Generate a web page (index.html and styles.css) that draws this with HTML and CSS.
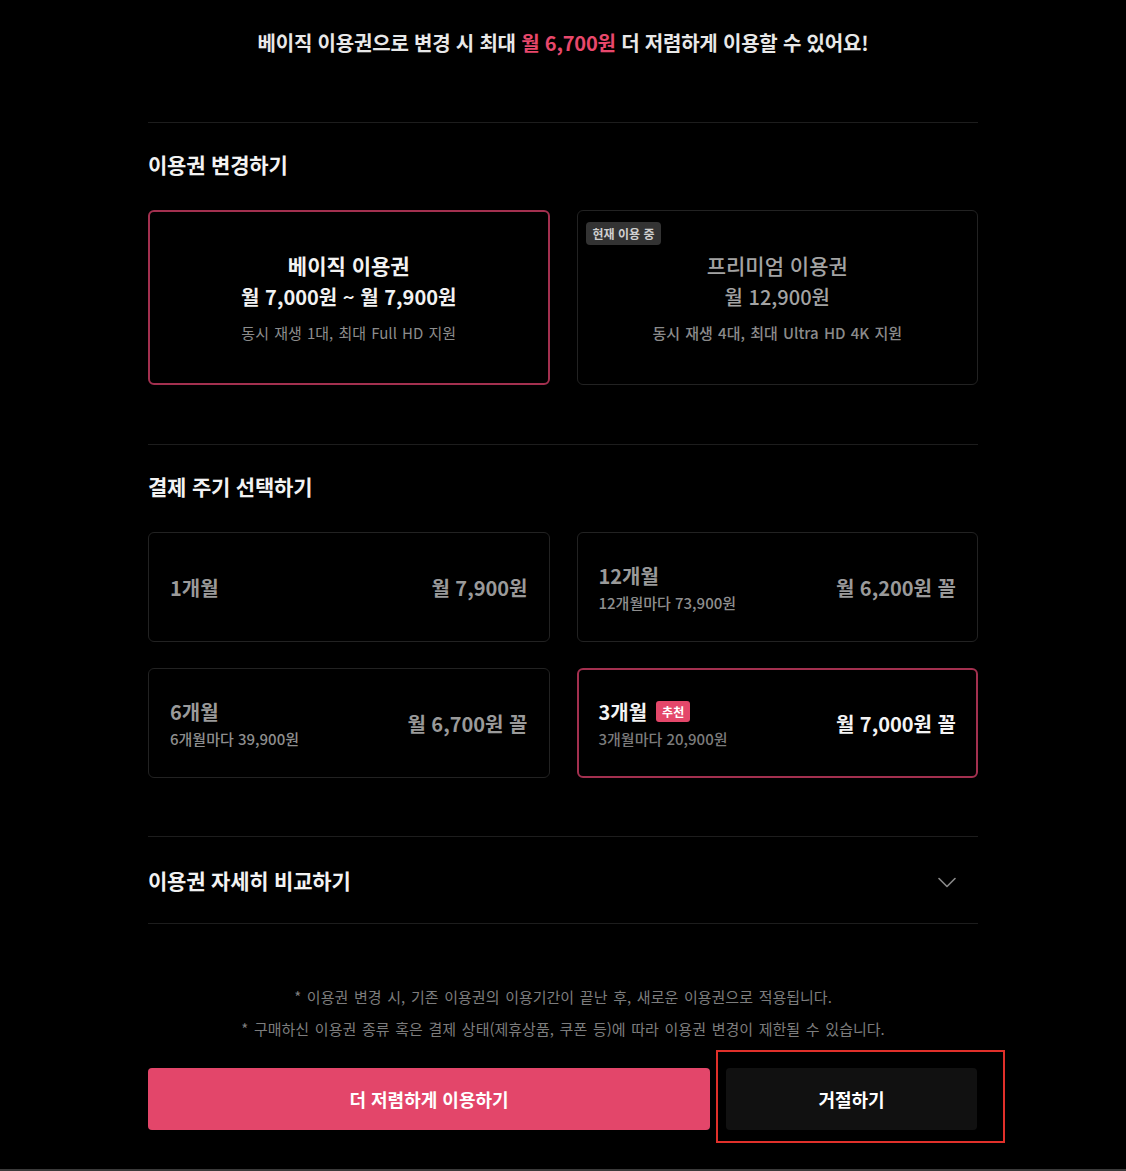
FILE: index.html
```html
<!DOCTYPE html>
<html lang="ko">
<head>
<meta charset="utf-8">
<title>이용권 변경</title>
<link rel="stylesheet" href="styles.css">
</head>
<body>
<div class="page">
  <p class="promo">베이직 이용권으로 변경 시 최대 <span class="accent">월 6,700원</span> 더 저렴하게 이용할 수 있어요!</p>

  <section class="section">
    <h2 class="heading">이용권 변경하기</h2>
    <div class="grid plans">
      <div class="plan selected">
        <div class="plan-title">베이직 이용권</div>
        <div class="plan-price">월 7,000원 ~ 월 7,900원</div>
        <div class="plan-desc">동시 재생 1대, 최대 Full HD 지원</div>
      </div>
      <div class="plan current">
        <span class="badge-current">현재 이용 중</span>
        <div class="plan-title">프리미엄 이용권</div>
        <div class="plan-price">월 12,900원</div>
        <div class="plan-desc">동시 재생 4대, 최대 Ultra HD 4K 지원</div>
      </div>
    </div>
  </section>

  <section class="section section-period">
    <h2 class="heading">결제 주기 선택하기</h2>
    <div class="grid periods">
      <div class="period">
        <div class="period-info">
          <div class="period-name">1개월</div>
        </div>
        <div class="period-price">월 7,900원</div>
      </div>
      <div class="period">
        <div class="period-info">
          <div class="period-name">12개월</div>
          <div class="period-sub">12개월마다 73,900원</div>
        </div>
        <div class="period-price">월 6,200원 꼴</div>
      </div>
      <div class="period">
        <div class="period-info">
          <div class="period-name">6개월</div>
          <div class="period-sub">6개월마다 39,900원</div>
        </div>
        <div class="period-price">월 6,700원 꼴</div>
      </div>
      <div class="period selected">
        <div class="period-info">
          <div class="period-name">3개월 <span class="badge-rec">추천</span></div>
          <div class="period-sub">3개월마다 20,900원</div>
        </div>
        <div class="period-price">월 7,000원 꼴</div>
      </div>
    </div>
  </section>

  <div class="compare">
    <span class="compare-title">이용권 자세히 비교하기</span>
    <svg class="chevron" width="18" height="11" viewBox="0 0 18 11" aria-hidden="true">
      <path d="M1 1.5 L9 9.5 L17 1.5" fill="none" stroke="#8a8a8a" stroke-width="1.6" stroke-linecap="round" stroke-linejoin="round"/>
    </svg>
  </div>

  <div class="notes">
    <p>* 이용권 변경 시, 기존 이용권의 이용기간이 끝난 후, 새로운 이용권으로 적용됩니다.</p>
    <p>* 구매하신 이용권 종류 혹은 결제 상태(제휴상품, 쿠폰 등)에 따라 이용권 변경이 제한될 수 있습니다.</p>
  </div>

  <div class="actions">
    <button class="btn btn-primary">더 저렴하게 이용하기</button>
    <button class="btn btn-dark">거절하기</button>
    <div class="highlight"></div>
  </div>
</div>
</body>
</html>
```

FILE: styles.css
```css
* {
  box-sizing: border-box;
}

html, body {
  margin: 0;
  padding: 0;
  background: #000;
}

body {
  font-family: "Noto Sans CJK KR", "Noto Sans", sans-serif;
  color: #fff;
  height: 1171px;
  overflow: hidden;
  border-bottom: 2px solid #3a3a3a;
}

.page {
  width: 830px;
  margin: 0 auto;
}

.promo {
  margin: 0;
  padding-top: 29px;
  height: 122px;
  text-align: center;
  font-size: 20px;
  line-height: 28px;
  font-weight: 700;
  color: #e8e8e8;
  letter-spacing: -0.2px;
}

.accent {
  color: #e8486c;
}

.section {
  border-top: 1px solid #1d1d1d;
  padding-bottom: 59px;
}

.section-period {
  padding-bottom: 58px;
}

.heading {
  margin: 27px 0 0;
  font-size: 21px;
  line-height: 28px;
  font-weight: 700;
  color: #f2f2f2;
  letter-spacing: -0.2px;
}

.grid {
  display: grid;
  grid-template-columns: 1fr 1fr;
  column-gap: 27px;
}

.plans {
  margin-top: 32px;
}

.plan {
  position: relative;
  height: 175px;
  border: 1px solid #222;
  border-radius: 6px;
  display: flex;
  flex-direction: column;
  align-items: center;
  justify-content: center;
  text-align: center;
}

.plan.selected {
  border: 2px solid #a3304f;
}

.plan-title {
  font-size: 21px;
  line-height: 30px;
  font-weight: 700;
  color: #f2f2f2;
}

.plan-price {
  font-size: 20px;
  line-height: 34px;
  font-weight: 700;
  color: #f2f2f2;
}

.plan-desc {
  margin-top: 7px;
  font-size: 15px;
  line-height: 24px;
  color: #8c8c8c;
  letter-spacing: 0;
  word-spacing: 1px;
}

.plan.current .plan-title,
.plan.current .plan-price {
  font-weight: 500;
  color: #a3a3a3;
}

.plan.current .plan-desc {
  font-weight: 500;
  color: #8a8a8a;
}

.badge-current {
  position: absolute;
  top: 11px;
  left: 8px;
  height: 23px;
  padding: 0 7px;
  border-radius: 4px;
  background: #333;
  color: #cfcfcf;
  font-size: 12px;
  line-height: 23px;
  font-weight: 700;
}

.periods {
  margin-top: 32px;
  row-gap: 26px;
}

.period {
  height: 110px;
  border: 1px solid #222;
  border-radius: 6px;
  padding: 0 21px;
  display: flex;
  align-items: center;
  justify-content: space-between;
}

.period.selected {
  border: 2px solid #a3304f;
  padding: 0 20px;
}

.period-name {
  display: flex;
  align-items: center;
  font-size: 20px;
  line-height: 27px;
  font-weight: 700;
  color: #9a9a9a;
}

.period-sub {
  margin-top: 3px;
  font-size: 15px;
  line-height: 21px;
  font-weight: 500;
  color: #8e8e8e;
  letter-spacing: 0;
}

.period-price {
  font-size: 20px;
  line-height: 27px;
  font-weight: 700;
  color: #9a9a9a;
}

.period.selected .period-name,
.period.selected .period-price {
  color: #f4f4f4;
}

.period.selected .period-sub {
  color: #7c7c7c;
}

.badge-rec {
  display: inline-block;
  margin-left: 9px;
  height: 21px;
  padding: 0 6px;
  border-radius: 3px;
  background: #e4476a;
  color: #fff;
  font-size: 12px;
  line-height: 21px;
  font-weight: 700;
}

.compare {
  height: 88px;
  border-top: 1px solid #1d1d1d;
  border-bottom: 1px solid #1d1d1d;
  display: flex;
  align-items: center;
  justify-content: space-between;
  padding-right: 22px;
}

.compare-title {
  font-size: 21px;
  line-height: 28px;
  font-weight: 700;
  color: #f2f2f2;
  letter-spacing: -0.2px;
}

.chevron {
  display: block;
  margin-top: 4px;
}

.notes {
  margin-top: 57px;
  text-align: center;
}

.notes p {
  margin: 0;
  font-size: 15px;
  line-height: 32px;
  color: #7d7d7d;
  letter-spacing: 0;
  word-spacing: 1.5px;
}

.actions {
  position: relative;
  margin-top: 23px;
  display: flex;
  gap: 16px;
  padding-right: 1px;
}

.btn {
  height: 62px;
  border: none;
  border-radius: 4px;
  font-family: inherit;
  font-size: 18px;
  font-weight: 700;
  color: #fff;
}

.btn-primary {
  width: 562px;
  background: #e3466a;
}

.btn-dark {
  flex: 1;
  background: #111;
}

.highlight {
  position: absolute;
  left: 568px;
  top: -18px;
  width: 289px;
  height: 93px;
  border: 2px solid #e0302a;
  pointer-events: none;
}
```
